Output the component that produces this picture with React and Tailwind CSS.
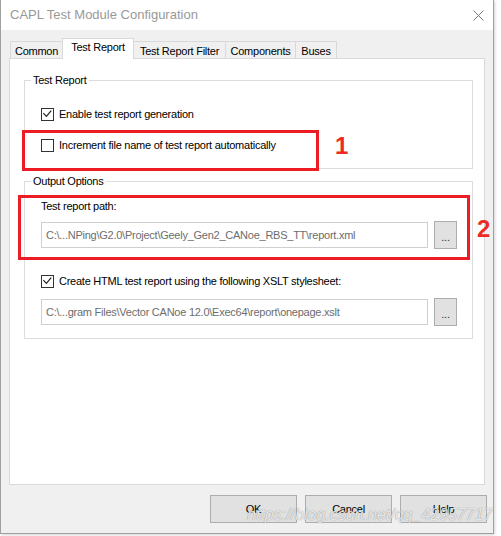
import React from "react";

const tabs = [
  { label: "Common", w: "w-[53px]" },
  { label: "Test Report", w: "w-[72px]", active: true },
  { label: "Test Report Filter", w: "w-[93px]" },
  { label: "Components", w: "w-[71px]" },
  { label: "Buses", w: "w-[42px]" },
];

function Check({ checked }) {
  return (
    <span className="w-[13px] h-[13px] border border-[#333] bg-white flex items-center justify-center shrink-0">
      {checked && (
        <svg width="11" height="11" viewBox="0 0 11 11">
          <path d="M1.4 4.2 L4.4 7.4 L9.2 1.6" stroke="#222" strokeWidth="1.2" fill="none" />
        </svg>
      )}
    </span>
  );
}

function CheckRow({ checked, children, className = "" }) {
  return (
    <div className={"flex items-center gap-[5px] h-[13px] " + className}>
      <Check checked={checked} />
      <span className="leading-[13px]">{children}</span>
    </div>
  );
}

function PathRow({ value, className = "" }) {
  return (
    <div className={"flex items-center gap-[6px] " + className}>
      <div className="w-[387px] h-[26px] border border-[#cfcfcf] bg-white flex items-center pl-[4px] text-[#6d6d6d] whitespace-nowrap overflow-hidden">
        {value}
      </div>
      <button type="button" className="w-[23px] h-[28px] border border-[#adadad] bg-[#e1e1e1] text-[#333] leading-none pt-[4px]">
        ...
      </button>
    </div>
  );
}

function Group({ title, className = "", children }) {
  return (
    <div className={"relative ml-[14px] w-[449px] border border-[#dcdcdc] " + className}>
      <span className="absolute -top-[7px] left-[6px] px-[2px] bg-white leading-[13px]">{title}</span>
      {children}
    </div>
  );
}

export default function App() {
  return (
    <div className="relative w-[501px] h-[536px] bg-white overflow-hidden font-['Liberation_Sans',Arial,sans-serif] text-[11px] tracking-[-0.25px] text-black">
      <div className="w-[494px] h-[534px] flex flex-col border-x border-b border-[#a0a0a0] shadow-[1px_1px_3px_rgba(0,0,0,0.18)]">
        {/* title bar */}
        <div className="h-[30px] bg-white flex items-center justify-between pl-[9px] pr-[9px]">
          <span className="text-[13px] tracking-normal text-[#999]">CAPL Test Module Configuration</span>
          <svg width="11" height="11" viewBox="0 0 11 11">
            <path d="M0.5 0.5 L10.5 10.5 M10.5 0.5 L0.5 10.5" stroke="#7a7a7a" strokeWidth="1" />
          </svg>
        </div>

        <div className="flex-1 bg-[#f0f0f0] pt-[8px] flex flex-col">
          {/* tabs */}
          <div className="relative z-10 h-[20px] ml-[9px] flex items-end">
            {tabs.map((t, i) =>
              t.active ? (
                <div key={t.label} className={t.w + " -ml-px h-[21px] -mb-px bg-white border border-b-0 border-[#d9d9d9] flex items-center justify-center pb-[3px]"}>
                  {t.label}
                </div>
              ) : (
                <div key={t.label} className={t.w + (i ? " -ml-px" : "") + " h-[17px] bg-[#f0f0f0] border border-b-0 border-[#d9d9d9] flex items-center justify-center pt-[2px]"}>
                  {t.label}
                </div>
              )
            )}
          </div>

          {/* panel */}
          <div className="ml-[8px] w-[476px] h-[427px] border border-[#d9d9d9] bg-white">
            <Group title="Test Report" className="mt-[21px] h-[89px] pl-[16px] pt-[27px]">
              <CheckRow checked>Enable test report generation</CheckRow>
              <CheckRow className="mt-[18px]">Increment file name of test report automatically</CheckRow>
            </Group>

            <Group title="Output Options" className="mt-[12px] h-[158px] pl-[16px] pt-[18px]">
              <div className="leading-[13px]">Test report path:</div>
              <PathRow className="mt-[8px]" value="C:\...NPing\G2.0\Project\Geely_Gen2_CANoe_RBS_TT\report.xml" />
              <CheckRow checked className="mt-[26px]">Create HTML test report using the following XSLT stylesheet:</CheckRow>
              <PathRow className="mt-[10px]" value="C:\...gram Files\Vector CANoe 12.0\Exec64\report\onepage.xslt" />
            </Group>
          </div>

          {/* dialog buttons */}
          <div className="mt-[10px] flex justify-end gap-[8px] pr-[6px]">
            {["OK", "Cancel", "Help"].map((b) => (
              <button key={b} type="button" className="w-[87px] h-[28px] border border-[#adadad] bg-[#e1e1e1] text-black">
                {b}
              </button>
            ))}
          </div>
        </div>
      </div>

      {/* annotations */}
      <div className="absolute left-[22px] top-[130px] w-[297px] h-[41px] border-[3px] border-[#ed1c24]" />
      <div className="absolute left-[18px] top-[195px] w-[452px] h-[65px] border-[3px] border-[#ed1c24]" />
      <span className="absolute left-[335px] top-[134px] text-[24px] leading-none font-bold tracking-normal text-[#ee2a24]">1</span>
      <span className="absolute left-[477px] top-[217px] text-[24px] leading-none font-bold tracking-normal text-[#ee2a24]">2</span>

      {/* watermark */}
      <span className="absolute left-[247px] top-[503px] text-[16px] italic tracking-normal text-white/80 [text-shadow:0_0_1px_rgba(0,0,0,0.5)] pointer-events-none">
        https://blog.csdn.net/qq_42957717
      </span>
    </div>
  );
}
